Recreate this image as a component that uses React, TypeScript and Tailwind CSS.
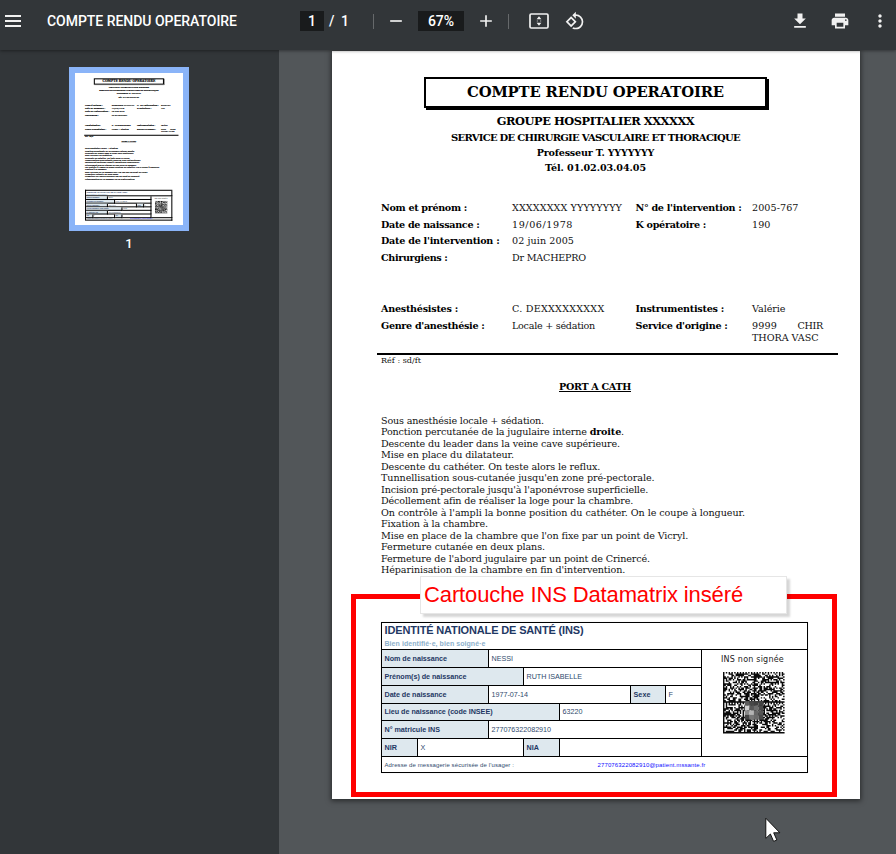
import { useLayoutEffect, useRef, type ReactNode } from 'react';
import {
  MdAdd,
  MdFileDownload,
  MdMoreVert,
  MdPrint,
  MdRemove,
  MdRotate90DegreesCcw,
} from 'react-icons/md';
import clsx from 'clsx';

const THUMB_SCALE = 108 / 528;

/** A single line of text tracked so that it spans `w` pixels. */
function T({ w, className, children }: { w?: number; className?: string; children: ReactNode }) {
  const ref = useRef<HTMLSpanElement>(null);
  useLayoutEffect(() => {
    const el = ref.current;
    if (!el || !w) return;
    el.style.letterSpacing = '0px';
    const n = (el.textContent ?? '').length;
    const drawn = el.getBoundingClientRect().width;
    const natural = drawn / (drawn / (el.offsetWidth || 1) < 0.5 ? THUMB_SCALE : 1);
    el.style.letterSpacing = `${(w - natural) / n}px`;
  }, [w]);
  return (
    <span ref={ref} className={clsx('inline-block whitespace-nowrap', className)}>
      {children}
    </span>
  );
}

const SIZE = 44;

/** Data Matrix modules: four regions, each with a solid L edge and a dotted edge. */
function buildMatrix() {
  let seed = 20771;
  const next = () => {
    seed = (seed * 1103515245 + 12345) % 2147483648;
    return seed / 2147483648;
  };
  let d = '';
  const half = SIZE / 2;
  for (let y = 0; y < SIZE; y++) {
    for (let x = 0; x < SIZE; x++) {
      const rx = x % half;
      const ry = y % half;
      const noise = next() > 0.46;
      let on = noise;
      if (rx === 0 || ry === half - 1) on = true;
      else if (ry === 0) on = rx % 2 === 0;
      else if (rx === half - 1) on = ry % 2 === 1;
      if (on) d += `M${x} ${y}h1.04v1.04h-1.04z`;
    }
  }
  return d;
}
const matrixPath = buildMatrix();
const mosaic = [
  ['#5a5a5a', '#484848', '#404040', '#444444'],
  ['#d0d0d0', '#585858', '#6e6e6e', '#4a4a4a'],
  ['#8a8a8a', '#b4b4b4', '#666666', '#555555'],
  ['#444444', '#777777', '#6a6a6a', '#484848'],
];

function DataMatrix() {
  return (
    <svg viewBox="0 0 44 44" className="size-[61.5px]">
      <path d={matrixPath} fill="#0a0a0a" />
      {mosaic.map((row, y) =>
        row.map((c, x) => (
          <rect key={`${x}-${y}`} x={15.5 + x * 3.3} y={20.8 + y * 3.3} width="3.4" height="3.4" fill={c} />
        )),
      )}
    </svg>
  );
}

type CellProps = { className: string; label?: boolean; w?: number; heavy?: boolean; children?: ReactNode };

function Cell({ className, label, w, heavy, children }: CellProps) {
  return (
    <div
      className={clsx(
        'flex items-center border-black pl-[2.5px] text-[7.2px] leading-none',
        heavy ? 'border-r-[5px] border-b-[5px]' : 'border-r border-b',
        label ? 'bg-[#dee8ee] font-bold text-[#1f3864]' : 'text-[#2f4a6d]',
        className,
      )}
    >
      {children && <T w={w}>{children}</T>}
    </div>
  );
}

function Cartouche({ heavy }: { heavy?: boolean }) {
  return (
    <div
      className={clsx(
        'flex h-[151px] w-[427px] flex-col border-black font-["Liberation_Sans",sans-serif]',
        heavy ? 'border-t-[5px] border-l-[5px]' : 'border-t border-l shadow-[0_0_0.5px_#000]',
      )}
    >
      <div
        className={clsx(
          'h-[27px] border-black pl-[2.5px]',
          heavy ? 'border-r-[5px] border-b-[5px]' : 'border-r border-b',
        )}
      >
        <div className="flex h-[15px] items-center text-[11px] leading-none font-bold text-[#1f3864]">
          <T w={199}>IDENTITÉ NATIONALE DE SANTÉ (INS)</T>
        </div>
        <div className="flex h-[11px] items-center text-[7px] leading-none font-bold text-[#8db0cb]">
          <T w={101}>Bien identifié·e, bien soigné·e</T>
        </div>
      </div>
      <div className="flex h-[107px]">
        <div className="flex w-[320px] flex-col">
          <div className="flex h-[18px]">
            <Cell heavy={heavy} label w={62.5} className="w-[107px]">Nom de naissance</Cell>
            <Cell heavy={heavy} w={21.5} className="w-[213px]">NESSI</Cell>
          </div>
          <div className="flex h-[18px]">
            <Cell heavy={heavy} label w={82} className="w-[142px]">Prénom(s) de naissance</Cell>
            <Cell heavy={heavy} w={55.5} className="w-[178px]">RUTH ISABELLE</Cell>
          </div>
          <div className="flex h-[18px]">
            <Cell heavy={heavy} label w={62} className="w-[107px]">Date de naissance</Cell>
            <Cell heavy={heavy} w={36.5} className="w-[142px]">1977-07-14</Cell>
            <Cell heavy={heavy} label w={17} className="w-[35px]">Sexe</Cell>
            <Cell heavy={heavy} className="w-[36px]">F</Cell>
          </div>
          <div className="flex h-[17px]">
            <Cell heavy={heavy} label w={108} className="w-[178px]">Lieu de naissance (code INSEE)</Cell>
            <Cell heavy={heavy} w={20} className="w-[142px]">63220</Cell>
          </div>
          <div className="flex h-[18px]">
            <Cell heavy={heavy} label w={55.5} className="w-[107px]">N° matricule INS</Cell>
            <Cell heavy={heavy} w={59.5} className="w-[213px]">277076322082910</Cell>
          </div>
          <div className="flex h-[18px]">
            <Cell heavy={heavy} label w={12.5} className="w-[36px]">NIR</Cell>
            <Cell heavy={heavy} className="w-[106px]">X</Cell>
            <Cell heavy={heavy} label w={12.5} className="w-[36px]">NIA</Cell>
            <Cell heavy={heavy} className="w-[142px]" />
          </div>
        </div>
        <div
          className={clsx(
            'flex flex-1 flex-col items-center border-black',
            heavy ? 'border-r-[5px] border-b-[5px]' : 'border-r border-b',
          )}
        >
          <div className='mt-[2px] mr-[4px] flex h-[15px] items-center font-["DejaVu_Sans",sans-serif] text-[8px] leading-none text-[#222]'>
            <T w={63}>INS non signée</T>
          </div>
          <div className="mt-[5px] mr-[1.5px]">
            <DataMatrix />
          </div>
        </div>
      </div>
      <div
        className={clsx(
          'flex h-[16px] items-center border-black pl-[2.5px] text-[6px] leading-none text-[#2f4a6d]',
          heavy ? 'border-r-[5px] border-b-[5px]' : 'border-r border-b',
        )}
      >
        <div className="w-[213px]">
          <T w={129.5}>Adresse de messagerie sécurisée de l'usager :</T>
        </div>
        <T w={108} className="text-[#1010ff]">277076322082910@patient.mssante.fr</T>
      </div>
    </div>
  );
}

type Field = [string, number];
type Row = { h: string; f: Field[] };

const patient: Row[] = [
  { h: 'h-[17px]', f: [['Nom et prénom :', 86], ['XXXXXXXX YYYYYYYY', 110], ["N° de l'intervention :", 106], ['2005-767', 46.5]] },
  { h: 'h-[17px]', f: [['Date de naissance :', 98.5], ['19/06/1978', 61], ['K opératoire :', 70.5], ['190', 18.5]] },
  { h: 'h-[16px]', f: [["Date de l'intervention :", 118.5], ['02 juin 2005', 62]] },
  { h: 'h-[17px]', f: [['Chirurgiens :', 66.5], ['Dr MACHEPRO', 74]] },
];

const columns = ['w-[131px] font-bold text-black', 'w-[123.5px]', 'w-[116.5px] font-bold text-black', ''];

function FieldRow({ row }: { row: Row }) {
  return (
    <div className={clsx('flex items-center', row.h)}>
      {row.f.map(([text, w], i) => (
        <div key={text} className={columns[i]}>
          <T w={w}>{text}</T>
        </div>
      ))}
    </div>
  );
}

const steps: { w: number; text: ReactNode }[] = [
  { w: 163, text: 'Sous anesthésie locale + sédation.' },
  { w: 243, text: <>Ponction percutanée de la jugulaire interne <b className="text-black">droite</b>.</> },
  { w: 239, text: 'Descente du leader dans la veine cave supérieure.' },
  { w: 133, text: 'Mise en place du dilatateur.' },
  { w: 219, text: 'Descente du cathéter. On teste alors le reflux.' },
  { w: 273.5, text: "Tunnellisation sous-cutanée jusqu'en zone pré-pectorale." },
  { w: 267, text: "Incision pré-pectorale jusqu'à l'aponévrose superficielle." },
  { w: 252, text: 'Décollement afin de réaliser la loge pour la chambre.' },
  { w: 364, text: "On contrôle à l'ampli la bonne position du cathéter. On le coupe à longueur." },
  { w: 107, text: 'Fixation à la chambre.' },
  { w: 307, text: "Mise en place de la chambre que l'on fixe par un point de Vicryl." },
  { w: 164, text: 'Fermeture cutanée en deux plans.' },
  { w: 269, text: "Fermeture de l'abord jugulaire par un point de Crinercé." },
  { w: 244, text: "Héparinisation de la chambre en fin d'intervention." },
];

function ReportPage({ heavy }: { heavy?: boolean }) {
  return (
    <div
      className={clsx(
        'flex h-[748px] w-[528px] flex-col bg-white pt-[26px] font-["DejaVu_Serif",serif] text-[9.6px] leading-none',
        heavy ? 'text-black [-webkit-text-stroke:0.6px_black]' : 'text-[#111]',
      )}
    >
      <div
        className={clsx(
          'ml-[92px] flex h-[31px] w-[343px] items-center justify-center border-black text-[14.8px] font-bold text-black shadow-[2px_2px_0_#000]',
          heavy ? 'border-[5px]' : 'border-2',
        )}
      >
        <T w={257}>COMPTE RENDU OPERATOIRE</T>
      </div>
      <div className="mr-px flex flex-col items-center pt-[5px] font-bold text-black">
        <div className="flex h-[17px] items-center text-[11.4px]"><T w={197.5}>GROUPE HOSPITALIER XXXXXX</T></div>
        <div className="flex h-[15px] items-center text-[10px]"><T w={289}>SERVICE DE CHIRURGIE VASCULAIRE ET THORACIQUE</T></div>
        <div className="flex h-[15px] items-center text-[9.6px]"><T w={117.5}>Professeur T. YYYYYYY</T></div>
        <div className="flex h-[15px] items-center text-[9.6px]"><T w={101}>Tél. 01.02.03.04.05</T></div>
      </div>
      <div className="mt-[24px] ml-[49px] flex flex-col">
        {patient.map((row) => <FieldRow key={row.f[0][0]} row={row} />)}
      </div>
      <div className="mt-[34px] ml-[49px] flex h-[53px] flex-col">
        <FieldRow row={{ h: 'h-[17px]', f: [['Anesthésistes :', 77], ['C. DEXXXXXXXXX', 92.5], ['Instrumentistes :', 88.5], ['Valérie', 33.5]] }} />
        <div className="flex">
          <div className="flex h-[17px] w-[131px] items-center font-bold text-black"><T w={103.5}>Genre d'anesthésie :</T></div>
          <div className="flex h-[17px] w-[123.5px] items-center"><T w={83}>Locale + sédation</T></div>
          <div className="flex h-[17px] w-[116.5px] items-center font-bold text-black"><T w={92}>Service d'origine :</T></div>
          <div className="w-[71px] pt-[2.5px] leading-[12px]">
            <div className="flex justify-between"><T w={25}>9999</T><T w={25.5}>CHIR</T></div>
            <div className="flex"><T w={66.5}>THORA VASC</T></div>
          </div>
        </div>
      </div>
      <div className={clsx('ml-[45px] w-[461px] shrink-0 bg-black', heavy ? 'mb-[-3px] h-[5px]' : 'h-[2px]')} />
      <div className="mt-px ml-[49px] flex h-[10px] items-center text-[8px]"><T w={40}>Réf : sd/ft</T></div>
      <div className="mt-[14px] mr-[2px] flex h-[14px] items-center justify-center font-bold text-black">
        <div className="border-b border-black leading-[9px]"><T w={72}>PORT A CATH</T></div>
      </div>
      <div className="mt-[21px] ml-[49px] flex flex-col">
        {steps.map((s, i) => (
          <div key={i} className="flex h-[11.5px] items-center"><T w={s.w}>{s.text}</T></div>
        ))}
      </div>
      <div className={clsx('mt-[46px] ml-[49px]', heavy && '[-webkit-text-stroke:0px]')}>
        <Cartouche heavy={heavy} />
      </div>
    </div>
  );
}

function FitPageIcon() {
  return (
    <svg viewBox="0 0 20 16" className="h-4 w-5" fill="none">
      <rect x="1" y="1" width="18" height="14" rx="1.2" stroke="#f1f1f1" strokeWidth="1.7" />
      <path d="M10 3.2 12.4 6.2H7.6zM10 12.8 7.6 9.8h4.8z" fill="#f1f1f1" />
      <path d="M7.8 8h1M11.2 8h1" stroke="#f1f1f1" strokeWidth="0.8" />
    </svg>
  );
}

function Toolbar() {
  return (
    <header className='z-10 flex h-[50px] shrink-0 items-center bg-[#323639] pb-[8px] font-[Roboto,sans-serif] text-[14px] font-medium text-white shadow-[0_1px_3px_rgba(0,0,0,0.4)]'>
      <div className="ml-[5px] flex w-[42px] flex-col gap-[3px]">
        <div className="h-[2px] w-4 bg-[#f1f1f1]" />
        <div className="h-[2px] w-4 bg-[#f1f1f1]" />
        <div className="h-[2px] w-4 bg-[#f1f1f1]" />
      </div>
      <div className="w-[253px]"><T w={190}>COMPTE RENDU OPERATOIRE</T></div>
      <div className="flex h-5 w-6 items-center justify-center bg-[#191b1c]">1</div>
      <div className="ml-[5px] w-[12px]">/</div>
      <div className="w-[32px]">1</div>
      <div className="h-[15px] w-px bg-[#66696b]" />
      <MdRemove className="ml-[12px] size-5 text-[#f1f1f1]" />
      <div className="ml-[12px] flex h-5 w-[46px] items-center justify-center bg-[#191b1c]">67%</div>
      <MdAdd className="ml-[12px] size-5 text-[#f1f1f1]" />
      <div className="ml-[12px] h-[15px] w-px bg-[#66696b]" />
      <div className="ml-[20px]"><FitPageIcon /></div>
      <MdRotate90DegreesCcw className="ml-[16px] size-5 text-[#f1f1f1]" />
      <MdFileDownload className="mr-5 ml-auto size-5 text-[#f1f1f1]" />
      <MdPrint className="mr-5 size-5 text-[#f1f1f1]" />
      <MdMoreVert className="mr-[6px] size-5 text-[#f1f1f1]" />
    </header>
  );
}

export default function App() {
  return (
    <div className="relative flex h-[854px] w-[896px] flex-col overflow-hidden bg-[#525659]">
      <Toolbar />
      <div className="flex flex-1">
        <aside className="flex w-[279px] shrink-0 flex-col items-center bg-[#323639] pt-[17px] pr-[21px]">
          <div className="h-[164px] w-[120px] overflow-hidden border-6 border-[#8ab4f8] bg-white">
            <div className="origin-top-left scale-[0.2045]">
              <ReportPage heavy />
            </div>
          </div>
          <div className='mt-[5px] font-[Roboto,sans-serif] text-[13px] leading-4 font-medium text-white'>1</div>
        </aside>
        <main className="flex-1 pt-px pl-[53px]">
          <div className="relative h-[748px] w-[528px] shadow-[0_1px_5px_1px_rgba(0,0,0,0.5)]">
            <ReportPage />
            {/* Annotation drawn over the report */}
            <div className="absolute top-[543px] left-[19px] h-[203px] w-[486px] border-5 border-[#ff0000]" />
            <div className='absolute top-[525px] left-[88px] flex h-[38px] w-[367px] items-center border border-[#e6e6e6] bg-white pl-[3px] font-["Liberation_Sans",sans-serif] text-[22px] leading-none text-[#ff0000] shadow-[3px_3px_2px_rgba(0,0,0,0.16)]'>
              <T w={319}>Cartouche INS Datamatrix inséré</T>
            </div>
          </div>
        </main>
      </div>
      <svg viewBox="0 0 16 26" className="absolute top-[817px] left-[765px] h-[26px] w-4">
        <path d="M.8 1.2v20.2l4.6-4.4 3.2 7.4 3.3-1.4-3.2-7.2h6.2z" fill="#fff" stroke="#111" strokeWidth="1" />
      </svg>
    </div>
  );
}
